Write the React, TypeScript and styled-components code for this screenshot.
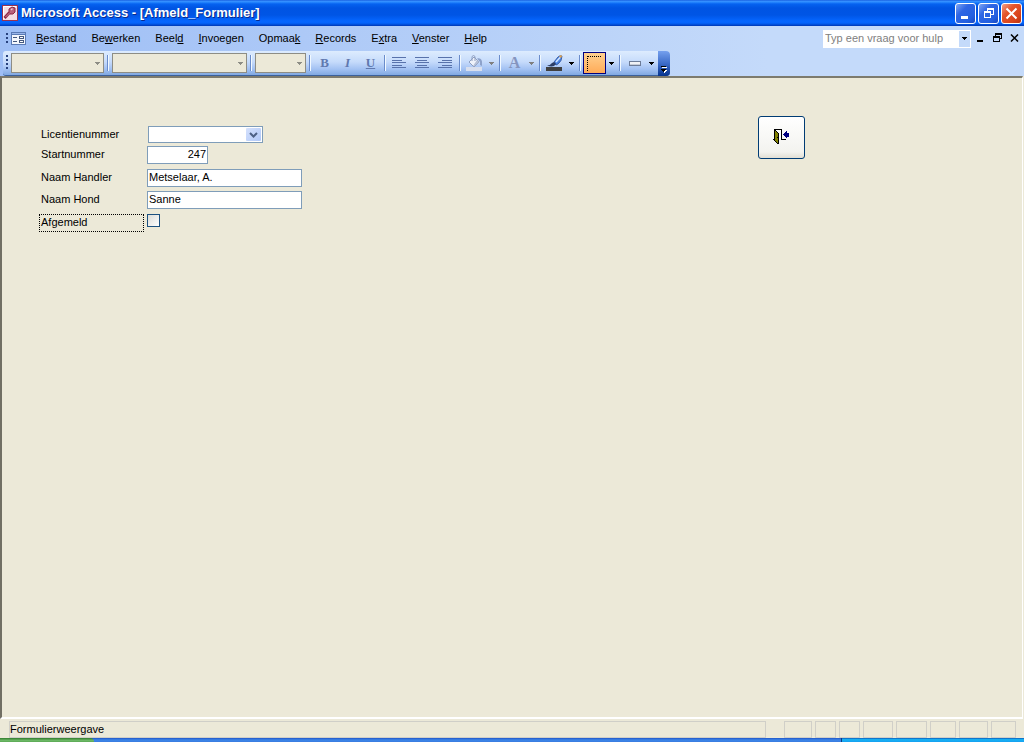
import React from "react";
import styled, { createGlobalStyle, css } from "styled-components";

const GlobalStyle = createGlobalStyle`
  * { box-sizing: border-box; }
  body {
    margin: 0;
    background: #ece9d8;
    color: #000;
    font-family: "Liberation Sans", Arial, sans-serif;
    font-size: 11px;
    line-height: 16px;
  }
  button, input, select { font: inherit; color: inherit; margin: 0; border-radius: 0; }
  button { padding: 0; border: 0; background: none; }
  svg { display: block; }
`;

const Window = styled.div`
  display: flex;
  flex-direction: column;
  min-height: 100vh;
`;

const TitleBar = styled.header`
  display: flex;
  align-items: center;
  height: 26px;
  padding: 0 2px;
  background: linear-gradient(
    #0a50d8 0,
    #3c93ff 1px,
    #2a8bff 2px,
    #0562f0 4px,
    #0054e3 8px,
    #0055e5 15px,
    #0566ff 21px,
    #0464fb 23px,
    #0048d0 25px,
    #0036b0 26px
  );
`;

const Title = styled.h1`
  flex: 1;
  margin: 0 0 0 3px;
  color: #fff;
  font: bold 13px/20px "Liberation Sans", Arial, sans-serif;
  text-shadow: 1px 1px 0 #0a2a8c;
  white-space: nowrap;
`;

const CaptionButtons = styled.div`
  display: flex;
  gap: 2px;
`;

const CaptionButton = styled.button<{ $danger?: boolean }>`
  display: grid;
  place-items: center;
  width: 21px;
  height: 21px;
  border: 1px solid #fff;
  border-radius: 3px;
  background: ${(p) =>
    p.$danger
      ? "linear-gradient(135deg, #f0a088, #e4552c 35%, #d8421a 75%, #b83210)"
      : "linear-gradient(135deg, #7ea6f4, #2f66e4 35%, #2460e0 75%, #1848c0)"};
`;

const Bars = styled.div`
  display: flex;
  flex-direction: column;
  height: 50px;
  background: linear-gradient(90deg, #9ebef5, #c4dafa 75%);
`;

const MenuBar = styled.nav`
  display: flex;
  align-items: center;
  height: 25px;
  padding: 0 4px 0 3px;
`;

const Grip = styled.span<{ $dots: number }>`
  flex: none;
  width: 7px;
  height: ${(p) => p.$dots * 4}px;
  background: repeating-linear-gradient(#27417d 0 2px, transparent 2px 4px) 3px 0 / 2px 100% no-repeat;
`;

const FormIconButton = styled.button`
  margin: 0 3px 0 1px;
`;

const MenuItem = styled.button`
  height: 20px;
  padding: 0 8px 2px 7px;
  line-height: 18px;
  white-space: nowrap;
`;

const Spacer = styled.span`
  flex: 1;
`;

const HelpBox = styled.div`
  display: flex;
  width: 148px;
  height: 18px;
  border: 1px solid #fff;
  background: #fff;
`;

const HelpInput = styled.input`
  flex: 1;
  min-width: 0;
  padding: 0 1px 2px;
  border: 0;
  outline: 0;
  background: none;
  &::placeholder { color: #808080; opacity: 1; }
`;

const HelpArrow = styled.button`
  display: grid;
  place-items: center;
  width: 11px;
  background: #c4dafa;
`;

const DocButtons = styled.div`
  display: flex;
  gap: 5px;
  margin-left: 3px;
`;

const DocButton = styled.button`
  display: grid;
  place-items: center;
  width: 12px;
  height: 18px;
  padding-bottom: 2px;
`;

const Toolbar = styled.div`
  display: flex;
  align-items: center;
  align-self: flex-start;
  height: 25px;
  margin-left: 3px;
  border-bottom: 1px solid #3b619c;
  border-radius: 3px 4px 4px 3px;
  background: linear-gradient(#ddecfe, #c6dbfb 45%, #a3c2f3 75%, #81a9e2);
`;

const Separator = styled.span`
  flex: none;
  width: 2px;
  height: 16px;
  margin: 0 2px;
  border-left: 1px solid #6a8ccb;
  border-right: 1px solid #f1f9ff;
`;

const SelectBox = styled.span<{ $width: number }>`
  position: relative;
  width: ${(p) => p.$width}px;
  height: 20px;
  margin: 0 1px;
  svg { position: absolute; right: 4px; top: 9px; pointer-events: none; }
`;

const ToolbarSelect = styled.select`
  display: block;
  width: 100%;
  height: 100%;
  border: 1px solid #8d8d85;
  background: #ece9d8;
  appearance: none;
  opacity: 1;
`;

const ToolButton = styled.button<{ $pressed?: boolean }>`
  display: grid;
  place-items: center;
  width: 23px;
  height: 22px;
  ${(p) =>
    p.$pressed &&
    css`
      border: 1px solid #000080;
      background: linear-gradient(#ffd08f, #ffab58);
    `}
`;

const ArrowButton = styled.button`
  display: grid;
  place-items: center;
  width: 11px;
  height: 22px;
`;

const Letter = styled.span<{ $kind: "b" | "i" | "u" | "a" }>`
  color: #6079af;
  font: bold 13px/14px "Liberation Serif", serif;
  ${(p) => p.$kind === "i" && css`font-style: italic;`}
  ${(p) => p.$kind === "u" && css`text-decoration: underline;`}
  ${(p) => p.$kind === "a" && css`font-size: 16px; color: #8595bf;`}
`;

const Overflow = styled.button`
  display: flex;
  justify-content: center;
  align-items: flex-end;
  width: 12px;
  height: 25px;
  margin: 0 0 -1px 1px;
  padding-bottom: 3px;
  border-radius: 0 4px 4px 0;
  background: linear-gradient(#75a0ee, #3d6cc8 50%, #06348e);
`;

const Client = styled.main`
  flex: 1;
  display: flex;
  align-items: flex-start;
  gap: 456px;
  padding: 38px 37px;
  margin-right: 1px;
  border-style: solid;
  border-width: 2px 1px 2px 2px;
  border-color: #7d7b6e #fff #fff #716f64;
`;

const Fields = styled.form`
  display: grid;
  grid-template-columns: 105px 155px;
  grid-template-rows: 20px 23px 22px 23px 18px;
  column-gap: 3px;
  align-items: start;
  margin-top: 10px;
`;

const FieldLabel = styled.label<{ $focused?: boolean }>`
  height: 18px;
  padding: 0 0 0 2px;
  line-height: 16px;
  ${(p) =>
    p.$focused &&
    css`
      padding: 0 0 0 1px;
      border: 1px dotted #000;
      line-height: 14px;
    `}
`;

const TextField = styled.input<{ $number?: boolean }>`
  width: ${(p) => (p.$number ? "61px" : "100%")};
  height: 18px;
  padding: 0 1px 2px;
  border: 1px solid #7f9db9;
  outline: 0;
  background: #fff;
  text-align: ${(p) => (p.$number ? "right" : "left")};
`;

const Combo = styled.span`
  position: relative;
  width: 116px;
  height: 17px;
  padding-left: 1px;
`;

const ComboSelect = styled.select`
  display: block;
  width: 100%;
  height: 100%;
  border: 1px solid #7f9db9;
  background: #fff;
  appearance: none;
`;

const ComboArrow = styled.span`
  position: absolute;
  top: 2px;
  right: 2px;
  display: grid;
  place-items: center;
  width: 15px;
  height: 13px;
  border-radius: 1px;
  background: linear-gradient(135deg, #d5e1fc, #b0c8f8);
  pointer-events: none;
`;

const CheckBox = styled.input`
  width: 13px;
  height: 13px;
  margin: 0;
  border: 1px solid #1c5180;
  background: linear-gradient(135deg, #dcdcd7, #fff);
  appearance: none;
`;

const ExitButton = styled.button`
  display: grid;
  place-items: center;
  width: 47px;
  height: 43px;
  padding-bottom: 2px;
  border: 1px solid #003c74;
  border-radius: 3px;
  background: linear-gradient(#fff, #f3f3ef 85%, #e2dfd4);
`;

const StatusBar = styled.footer`
  display: flex;
  gap: 3px;
  height: 19px;
  padding: 2px 8px 0 9px;
`;

const StatusText = styled.div`
  flex: 1;
  margin-right: 15px;
  border: 1px solid #d0cfc8;
  line-height: 15px;
`;

const StatusCell = styled.div<{ $width: number }>`
  width: ${(p) => p.$width}px;
  border: 1px solid #d0cfc8;
`;

const TaskBar = styled.div`
  display: flex;
  height: 4px;
  background: linear-gradient(#1f55c8, #3c86e8 50%, #3a7ce0);
`;

const StartEdge = styled.div`
  width: 94px;
  border-radius: 0 4px 0 0;
  background: linear-gradient(#2f7a2c, #6db866 60%, #5aa854);
`;

const TrayEdge = styled.div`
  width: 183px;
  margin-left: auto;
  border-left: 1px solid #0a3a80;
  background: linear-gradient(#0c59b9, #18b4f4 40%, #159ff0);
`;

function Down({ color = "#000" }: { color?: string }) {
  return (
    <svg width="5" height="3" viewBox="0 0 5 3" shapeRendering="crispEdges">
      <path d="M0 0h5v1H4v1H3v1H2V2H1V1H0z" fill={color} />
    </svg>
  );
}

function KeyIcon() {
  return (
    <svg width="16" height="16" viewBox="0 0 16 16">
      <rect x=".5" y=".5" width="15" height="15" fill="#f3dde4" stroke="#9a3350" />
      <path d="M1.500 14V1.500H14" fill="none" stroke="#fff" />
      <path d="M7 4l3-2 3 1v4l-2 2H8L7 8z" fill="#b9607a" stroke="#8e2444" />
      <path d="M7.500 7.500l-5 5.500" stroke="#8e2444" strokeWidth="3" />
      <path d="M8 7.500L3.500 12" stroke="#d08a9e" />
      <path d="M9 5l1.500-1.500" stroke="#f0c4d0" strokeWidth="1.500" />
    </svg>
  );
}

function FormIcon() {
  return (
    <svg width="15" height="13" viewBox="0 0 15 13" shapeRendering="crispEdges">
      <path d="M0 0h15v13H0z" fill="#5a7ab4" />
      <path d="M1 3h13v9H1z" fill="#f4f7fc" />
      <path d="M1 1h13v1H1z" fill="#9ab6ea" />
      <path d="M2 5h4v1H2zM2 9h4v1H2zM8 4h5v3H8zM8 8h5v3H8z" fill="#44587e" />
      <path d="M9 5h3v1H9zM9 9h3v1H9z" fill="#fff" />
    </svg>
  );
}

function AlignIcon({ kind }: { kind: "left" | "center" | "right" }) {
  return (
    <svg width="15" height="13" viewBox="0 0 15 13" shapeRendering="crispEdges" fill="#5872ab">
      {[0, 3, 5, 8, 10].map((y, i) => {
        const w = i % 2 ? 10 : 14;
        const x = kind === "left" ? 0 : kind === "center" ? (14 - w) / 2 : 14 - w;
        return <rect key={y} x={x} y={y} width={w} height="1" />;
      })}
    </svg>
  );
}

function BucketIcon() {
  return (
    <svg width="17" height="16" viewBox="0 0 17 16">
      <path d="M3 7l5-5 5 5-5 5z" fill="#eef2fa" stroke="#8f9fc0" />
      <path d="M8 11.500l5-4.500-2-2-4 6z" fill="#b4bfd6" />
      <path d="M6 6V1.500q1.500-2 3 0V6" fill="none" stroke="#8f9fc0" />
      <path d="M11 3.500q4-1 5 3v4.500l-2-1V7z" fill="#8da2cb" />
      <path d="M0 12h16v4H0z" fill="#d8dfee" />
    </svg>
  );
}

function BrushIcon() {
  return (
    <svg width="17" height="16" viewBox="0 0 17 16">
      <path d="M8 7l4-5q2-2 4-1 0 5-4 8l-2 1z" fill="#4c86e4" stroke="#274a94" strokeWidth=".8" />
      <path d="M13 1.500l2-1.500 1 1-1 2z" fill="#e9a64a" />
      <path d="M10 7l4-4.500" stroke="#d5e6ff" strokeWidth="1.500" />
      <path d="M1 10.500q3 0 5-2.500l2-1 2 2-2 2q-3 1-7-.5z" fill="#2c3e66" />
      <path d="M0 12h16v4H0z" fill="#404040" />
    </svg>
  );
}

function BorderIcon() {
  return (
    <svg width="15" height="15" viewBox="0 0 15 15" fill="none" stroke="#000" shapeRendering="crispEdges">
      <path d="M1 .5h14M.5 0v15" strokeDasharray="1 1" />
    </svg>
  );
}

function LineIcon() {
  return (
    <svg width="12" height="5" viewBox="0 0 12 5" shapeRendering="crispEdges">
      <path d="M0 0h12v5H0z" fill="#6d7c98" />
      <path d="M1 1h10v3H1z" fill="#f0f2f6" />
      <path d="M1 3h10v1H1z" fill="#c6ccd8" />
    </svg>
  );
}

function DoorIcon() {
  return (
    <svg width="17" height="16" viewBox="0 0 17 16" shapeRendering="crispEdges">
      <path d="M2 1h6v10H2z" fill="#fff" />
      <path d="M1 0h8v10h4v1H8V1H2v10H0v-1h1z" fill="#000" />
      <path d="M1 1h2v1h1v1h1v1h1v11H4v-1H3v-1H2v-1H1z" fill="#000" />
      <path d="M2 2h1v1h1v1h1v10H4v-1H3v-1H2z" fill="#808000" />
      <path d="M4 8h1v1H4z" fill="#000" />
      <path d="M10 5h1V4h1V3h1V2h1v2h2v4h-2v1h-1V8h-1V7h-1V6h-1z" fill="#000080" />
    </svg>
  );
}

const menus: [string, string, string][] = [
  ["", "B", "estand"],
  ["Be", "w", "erken"],
  ["Beel", "d", ""],
  ["", "I", "nvoegen"],
  ["Opmaa", "k", ""],
  ["", "R", "ecords"],
  ["E", "x", "tra"],
  ["", "V", "enster"],
  ["", "H", "elp"],
];

const statusCells = [28, 21, 21, 30, 31, 26, 29, 25];

function RestoreGlyph({ color, size }: { color: string; size: number }) {
  return (
    <svg width={size} height={size} viewBox="0 0 10 10" fill={color} shapeRendering="crispEdges">
      <path d="M3 0h7v7H7V6h2V2H4v1H3z" />
      <path fillRule="evenodd" d="M0 3h7v7H0zM1 5v4h5V5z" />
    </svg>
  );
}

function DisabledSelect({ width, label }: { width: number; label: string }) {
  return (
    <SelectBox $width={width}>
      <ToolbarSelect disabled aria-label={label} />
      <Down color="#8d8d85" />
    </SelectBox>
  );
}

export default function App() {
  return (
    <Window>
      <GlobalStyle />
      <TitleBar>
        <KeyIcon />
        <Title>Microsoft Access - [Afmeld_Formulier]</Title>
        <CaptionButtons>
          <CaptionButton aria-label="Minimaliseren">
            <svg width="13" height="13" viewBox="0 0 13 13">
              <path d="M2 9h7v3H2z" fill="#fff" />
            </svg>
          </CaptionButton>
          <CaptionButton aria-label="Vorig formaat">
            <RestoreGlyph color="#fff" size={10} />
          </CaptionButton>
          <CaptionButton $danger aria-label="Sluiten">
            <svg width="13" height="13" viewBox="0 0 13 13">
              <path d="M1.500 1.500l10 10M11.500 1.500l-10 10" stroke="#fff" strokeWidth="2" />
            </svg>
          </CaptionButton>
        </CaptionButtons>
      </TitleBar>

      <Bars>
        <MenuBar>
          <Grip $dots={3} />
          <FormIconButton aria-label="Formulier">
            <FormIcon />
          </FormIconButton>
          {menus.map(([before, key, after]) => (
            <MenuItem key={before + key + after}>
              {before}
              <u>{key}</u>
              {after}
            </MenuItem>
          ))}
          <Spacer />
          <HelpBox>
            <HelpInput aria-label="Vraag voor hulp" placeholder="Typ een vraag voor hulp" />
            <HelpArrow aria-label="Eerdere vragen">
              <Down />
            </HelpArrow>
          </HelpBox>
          <DocButtons>
            <DocButton aria-label="Formulier minimaliseren">
              <svg width="8" height="9" viewBox="0 0 8 9">
                <path d="M1 7h6v2H1z" />
              </svg>
            </DocButton>
            <DocButton aria-label="Formulier herstellen">
              <svg width="9" height="9" viewBox="0 0 9 9" shapeRendering="crispEdges">
                <path d="M2 0h7v6H7V5h1V2H3v1H2z" />
                <path fillRule="evenodd" d="M0 3h7v6H0zM1 5v3h5V5z" />
              </svg>
            </DocButton>
            <DocButton aria-label="Formulier sluiten">
              <svg width="9" height="8" viewBox="0 0 9 8">
                <path d="M1 .5l7 7M8 .5l-7 7" stroke="#000" strokeWidth="1.500" />
              </svg>
            </DocButton>
          </DocButtons>
        </MenuBar>

        <Toolbar>
          <Grip $dots={4} />
          <DisabledSelect width={93} label="Object" />
          <Separator />
          <DisabledSelect width={135} label="Lettertype" />
          <Separator />
          <DisabledSelect width={51} label="Tekengrootte" />
          <Separator />
          <ToolButton aria-label="Vet"><Letter $kind="b">B</Letter></ToolButton>
          <ToolButton aria-label="Cursief"><Letter $kind="i">I</Letter></ToolButton>
          <ToolButton aria-label="Onderstrepen"><Letter $kind="u">U</Letter></ToolButton>
          <Separator />
          <ToolButton aria-label="Links uitlijnen"><AlignIcon kind="left" /></ToolButton>
          <ToolButton aria-label="Centreren"><AlignIcon kind="center" /></ToolButton>
          <ToolButton aria-label="Rechts uitlijnen"><AlignIcon kind="right" /></ToolButton>
          <Separator />
          <ToolButton aria-label="Opvulkleur"><BucketIcon /></ToolButton>
          <ArrowButton aria-label="Opvulkleur kiezen"><Down color="#808080" /></ArrowButton>
          <Separator />
          <ToolButton aria-label="Tekstkleur"><Letter $kind="a">A</Letter></ToolButton>
          <ArrowButton aria-label="Tekstkleur kiezen"><Down color="#808080" /></ArrowButton>
          <Separator />
          <ToolButton aria-label="Lijnkleur"><BrushIcon /></ToolButton>
          <ArrowButton aria-label="Lijnkleur kiezen"><Down /></ArrowButton>
          <Separator />
          <ToolButton $pressed aria-label="Rand"><BorderIcon /></ToolButton>
          <ArrowButton aria-label="Rand kiezen"><Down /></ArrowButton>
          <Separator />
          <ToolButton aria-label="Speciaal effect"><LineIcon /></ToolButton>
          <ArrowButton aria-label="Speciaal effect kiezen"><Down /></ArrowButton>
          <Overflow aria-label="Werkbalkopties">
            <svg width="6" height="7" viewBox="0 0 6 7" shapeRendering="crispEdges">
              <path d="M1 1h5v1H1zM1 4h5v1H5v1H4v1H3V6H2V5H1z" fill="#fff" />
              <path d="M0 0h5v1H0zM0 3h5v1H4v1H3v1H2V5H1V4H0z" fill="#000" />
            </svg>
          </Overflow>
        </Toolbar>
      </Bars>

      <Client>
        <Fields>
          <FieldLabel htmlFor="licentie">Licentienummer</FieldLabel>
          <Combo>
            <ComboSelect id="licentie" />
            <ComboArrow>
              <svg width="9" height="6" viewBox="0 0 9 6">
                <path d="M1 1l3.500 3.500L8 1" fill="none" stroke="#4d6185" strokeWidth="2" />
              </svg>
            </ComboArrow>
          </Combo>
          <FieldLabel htmlFor="start">Startnummer</FieldLabel>
          <TextField id="start" $number defaultValue="247" />
          <FieldLabel htmlFor="handler">Naam Handler</FieldLabel>
          <TextField id="handler" defaultValue="Metselaar, A." />
          <FieldLabel htmlFor="hond">Naam Hond</FieldLabel>
          <TextField id="hond" defaultValue="Sanne" />
          <FieldLabel htmlFor="afgemeld" $focused>Afgemeld</FieldLabel>
          <CheckBox id="afgemeld" type="checkbox" />
        </Fields>
        <ExitButton aria-label="Formulier afsluiten">
          <DoorIcon />
        </ExitButton>
      </Client>

      <StatusBar>
        <StatusText>Formulierweergave</StatusText>
        {statusCells.map((width, i) => (
          <StatusCell key={i} $width={width} />
        ))}
      </StatusBar>
      <TaskBar>
        <StartEdge />
        <TrayEdge />
      </TaskBar>
    </Window>
  );
}
